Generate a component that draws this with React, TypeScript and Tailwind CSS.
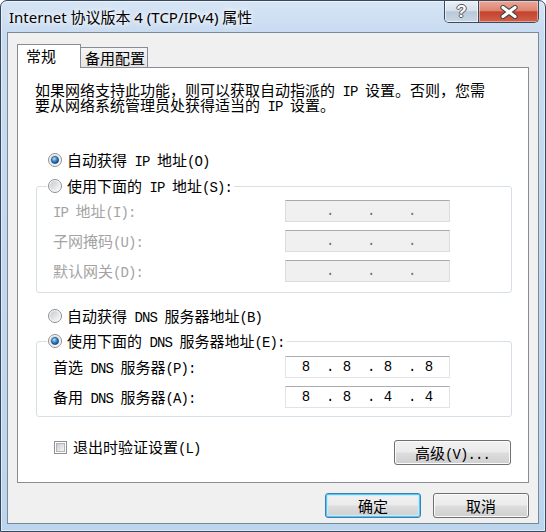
import React from 'react'

// Win7 "Internet 协议版本 4 (TCP/IPv4) 属性" dialog

const CJK = "font-['Noto_Sans_CJK_SC','Noto_Sans_CJK_JP',sans-serif]"

// ascii runs are drawn in a half-width mono face, like SimSun's latin
function Mix({ text }: { text: string }) {
  const parts = text.split(/([ -~]+)/)
  return (
    <>
      {parts.map((p, i) =>
        p === '' ? null : /^[ -~]+$/.test(p) ? (
          <span key={i} className="font-['Liberation_Mono',monospace] text-[14px] tracking-[-0.9px]">
            {p}
          </span>
        ) : (
          <span key={i}>{p}</span>
        )
      )}
    </>
  )
}

function Radio({ checked }: { checked?: boolean }) {
  return (
    <svg width="14" height="14" viewBox="0 0 14 14" className="shrink-0">
      <defs>
        <linearGradient id="rbg" x1="0" y1="0" x2="1" y2="1">
          <stop offset="0" stopColor="#c6cad0" />
          <stop offset="1" stopColor="#fbfbfb" />
        </linearGradient>
        <radialGradient id="rdot" cx="0.38" cy="0.32" r="0.75">
          <stop offset="0" stopColor="#b9e4ff" />
          <stop offset="0.45" stopColor="#3d8fd6" />
          <stop offset="1" stopColor="#0e3a6b" />
        </radialGradient>
      </defs>
      <circle cx="7" cy="7" r="6.5" fill="#f7f7f7" stroke="#8e8f8f" />
      <circle cx="7" cy="7" r="5" fill="url(#rbg)" />
      {checked && <circle cx="7" cy="7" r="3.6" fill="url(#rdot)" stroke="#1b4b7c" strokeWidth="0.7" />}
    </svg>
  )
}

function RadioRow({ label, checked, className = '' }: { label: string; checked?: boolean; className?: string }) {
  return (
    <div className={`flex h-[20px] items-center gap-[5px] whitespace-pre ${className}`}>
      <Radio checked={checked} />
      <span className="h-[20px] leading-[20px]">
        <Mix text={label} />
      </span>
    </div>
  )
}

function IpBox({ value, disabled }: { value?: string[]; disabled?: boolean }) {
  const octets = value ?? ['', '', '', '']
  return (
    <div
      className={`flex h-[22px] w-[165px] shrink-0 items-center border pl-[3px] ${
        disabled
          ? 'border-[#dcdcdc] border-t-[#a9a9a9] bg-[#f0f0f0] text-[#6d6d6d]'
          : 'border-[#e2e3ea] border-t-[#abadb3] bg-white text-black'
      }`}
    >
      {octets.map((o, i) => (
        <React.Fragment key={i}>
          <span className="h-[20px] w-[34px] shrink-0 text-center font-['Liberation_Mono',monospace] text-[14px] leading-[20px]">
            {o}
          </span>
          {i < 3 && (
            <span className="h-[20px] w-[7px] shrink-0 pl-[3px] font-['Liberation_Mono',monospace] text-[14px] leading-[20px]">
              .
            </span>
          )}
        </React.Fragment>
      ))}
    </div>
  )
}

function Field({ label, value, disabled, className = '' }: { label: string; value?: string[]; disabled?: boolean; className?: string }) {
  return (
    <div className={`flex h-[22px] items-center ${className}`}>
      <span className={`h-[20px] w-[232px] shrink-0 whitespace-pre leading-[20px] ${disabled ? 'text-[#a3a3a3]' : 'text-black'}`}>
        <Mix text={label} />
      </span>
      <IpBox value={value} disabled={disabled} />
    </div>
  )
}

function Button({ label, primary, className = '' }: { label: string; primary?: boolean; className?: string }) {
  return (
    <div
      className={`flex h-[25px] items-center justify-center rounded-[3px] border whitespace-pre bg-[linear-gradient(#f2f2f2_0%,#ebebeb_48%,#dddddd_52%,#cfcfcf_100%)] ${
        primary
          ? 'border-[#3c7fb1] shadow-[inset_0_0_0_1px_#58c6f0,inset_0_0_1px_2px_#c3ecfc]'
          : 'border-[#707070] shadow-[inset_0_0_0_1px_#fbfbfb]'
      } ${className}`}
    >
      <span className="h-[20px] leading-[20px]">
        <Mix text={label} />
      </span>
    </div>
  )
}

function Checkbox() {
  return (
    <div className="h-[13px] w-[13px] shrink-0 border border-[#8e8f8f] bg-white p-px">
      <div className="h-full w-full border border-[#b0b5bb] bg-[linear-gradient(135deg,#c9cdd3,#f7f7f7)]" />
    </div>
  )
}

export default function App() {
  return (
    <div className="h-[532px] w-[546px] bg-white">
      <div className="flex h-[532px] w-[546px] flex-col rounded-t-[7px] border border-[#39475a] bg-[linear-gradient(180deg,#d6e5f5_0px,#c8dbf1_32px,#bcd5ee_100%)] shadow-[inset_0_0_0_1px_rgba(255,255,255,0.5)]">
        {/* title bar */}
        <div className="flex h-[31px] shrink-0">
          <div className="whitespace-pre pl-[8px] pt-[5px] font-['Noto_Sans','Noto_Sans_CJK_SC',sans-serif] text-[15px] leading-[22px] text-black [text-shadow:0_0_8px_#fff,0_0_4px_#fff]">
            Internet 协议版本 4 (TCP/IPv4) 属性
          </div>
          <div className="ml-auto mr-[6px] flex h-[22px] overflow-hidden rounded-b-[5px] border border-t-0 border-[#3e4a5a]">
            <div className="flex w-[34px] items-center justify-center border-r border-[#3e4a5a] bg-[linear-gradient(#e9eff6_0%,#d6e0ec_45%,#b9c9da_52%,#cad7e5_100%)] shadow-[inset_0_0_0_1px_rgba(255,255,255,0.6)]">
              <span className="font-['Liberation_Sans',sans-serif] text-[17px] font-bold leading-none text-white [text-shadow:1px_0_#555,-1px_0_#555,0_1px_#555,0_-1px_#555]">
                ?
              </span>
            </div>
            <div className="flex w-[59px] items-center justify-center bg-[linear-gradient(#eaa898_0%,#dc8672_45%,#c4432f_52%,#d0604a_100%)] shadow-[inset_0_0_0_1px_rgba(255,225,215,0.5)]">
              <svg width="20" height="14" viewBox="0 0 20 14">
                <path d="M4 2.5 L16 11.5 M16 2.5 L4 11.5" stroke="#3b3b3b" strokeWidth="5.2" strokeLinecap="round" />
                <path d="M4 2.5 L16 11.5 M16 2.5 L4 11.5" stroke="#ffffff" strokeWidth="3.2" strokeLinecap="round" />
              </svg>
            </div>
          </div>
        </div>

        {/* client area */}
        <div className={`mb-[7px] ml-[6px] mr-[6px] flex flex-1 flex-col border border-[#7c8896] bg-[#f0f0f0] px-[9px] pb-[5px] pt-[11px] text-[15px] text-black ${CJK}`}>
          {/* tabs */}
          <div className="flex h-[23px] shrink-0 items-end">
            <div className="relative z-10 -mb-px h-[24px] w-[64px] border border-b-0 border-[#898c95] bg-white pl-[8px] pt-[1px] leading-[20px]">
              常规
            </div>
            <div className="h-[20px] w-[67px] border border-b-0 border-l-0 border-[#898c95] bg-[linear-gradient(#f5f5f5,#e4e4e4)] pl-[4px] leading-[19px]">
              备用配置
            </div>
          </div>

          {/* tab page */}
          <div className="flex flex-1 flex-col border border-[#898c95] bg-white pl-[17px] pr-[16px] pt-[14px]">
            <div className="h-[15px] whitespace-pre leading-[15px]">
              <Mix text="如果网络支持此功能，则可以获取自动指派的 IP 设置。否则，您需" />
            </div>
            <div className="h-[16px] whitespace-pre leading-[15px]">
              <Mix text="要从网络系统管理员处获得适当的 IP 设置。" />
            </div>

            <RadioRow label="自动获得 IP 地址(O)" checked className="ml-[13px] mt-[37px]" />

            <div className="ml-px mt-[16px] rounded-[3px] border border-[#d5dfe5] pb-[10px] pl-[16px]">
              <RadioRow label="使用下面的 IP 地址(S):" className="-mt-[11px] ml-[-6px] w-fit bg-white pl-px pr-[2px]" />
              <Field label="IP 地址(I):" disabled className="mt-[4px]" />
              <Field label="子网掩码(U):" disabled className="mt-[8px]" />
              <Field label="默认网关(D):" disabled className="mt-[8px]" />
            </div>

            <RadioRow label="自动获得 DNS 服务器地址(B)" className="ml-[13px] mt-[13px]" />

            <div className="ml-px mt-[15px] rounded-[3px] border border-[#d5dfe5] pb-[8px] pl-[16px]">
              <RadioRow label="使用下面的 DNS 服务器地址(E):" checked className="-mt-[11px] ml-[-6px] w-fit bg-white pl-px pr-[2px]" />
              <Field label="首选 DNS 服务器(P):" value={['8', '8', '8', '8']} className="mt-[5px]" />
              <Field label="备用 DNS 服务器(A):" value={['8', '8', '4', '4']} className="mt-[8px]" />
            </div>

            <div className="mt-[23px] flex items-start justify-between">
              <div className="-mt-[3px] ml-[19px] flex h-[20px] items-center gap-[6px] whitespace-pre">
                <Checkbox />
                <span className="h-[20px] leading-[20px]">
                  <Mix text="退出时验证设置(L)" />
                </span>
              </div>
              <Button label="高级(V)..." className="mr-px h-[24px] w-[117px]" />
            </div>
          </div>

          {/* dialog buttons */}
          <div className="mt-[10px] flex shrink-0 justify-end gap-[12px]">
            <Button label="确定" primary className="w-[96px]" />
            <Button label="取消" className="w-[96px]" />
          </div>
        </div>
      </div>
    </div>
  )
}
